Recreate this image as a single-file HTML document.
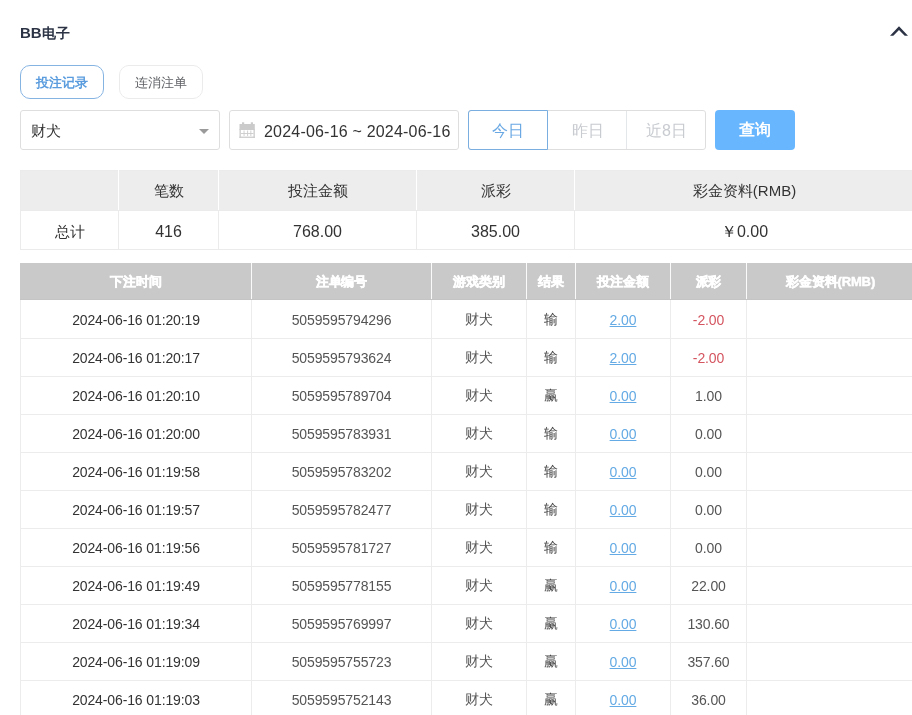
<!DOCTYPE html>
<html><head><meta charset="utf-8">
<style>
*{box-sizing:border-box;margin:0;padding:0}
html,body{width:912px;height:715px;overflow:hidden;background:#fff;font-family:"Liberation Sans",sans-serif;color:#333}
.abs{position:absolute}
.title{left:20px;top:24px;font-size:15px;font-weight:bold;color:#2b3344;line-height:18px}
.chev{left:889px;top:26px;width:18px;height:12px}
.tab{top:65px;height:34px;width:84px;border-radius:10px;border:1px solid #ebebeb;font-size:13px;line-height:33px;text-align:center;color:#606266}
.tab.on{border-color:#86b4e2;color:#5a9cde;font-weight:bold}
.box{top:110px;height:40px;border:1px solid #dedede;border-radius:3px}
.sel{left:20px;width:200px;font-size:15px;line-height:40px;padding-left:10px;color:#333}
.date{left:229px;width:230px;font-size:16px;line-height:41px;padding-left:34px;color:#333;letter-spacing:0.2px}
.grp{left:468px;width:238px}
.grp div{position:absolute;top:-1px;height:40px;line-height:42px;text-align:center;font-size:16px;color:#c8cbd0}
.grp .on{left:-1px;width:80px;color:#6aa8e4;border:1px solid #7aaee0;border-radius:3px 0 0 3px;line-height:40px}
.grp .sep{width:1px;background:#e4e6ea;top:0;height:38px}
.btn{left:715px;top:110px;width:80px;height:40px;border-radius:4px;background:#68b6fd;color:#fff;font-size:16px;line-height:40px;text-align:center;font-weight:600}
table{border-collapse:collapse;position:absolute;table-layout:fixed}
.sum{left:20px;top:170px;width:894px}
.sum td{border:1px solid #ebebeb;height:39px;text-align:center;font-size:16px;color:#333}
.sum tr.h td{font-size:15px}
.sum tr.d td{padding-top:4px}
.sum tr.d td:first-child{font-size:15px}
.sum tr.h td{background:#ededed;height:40px;padding-top:2px;border-right-color:#fff}
.det{left:20px;top:263px;width:894px}
.det td{border:1px solid #ececec;height:38px;text-align:center;font-size:14px;color:#333;letter-spacing:-0.12px}
.det td:nth-child(2),.det td:nth-child(3),.det td:nth-child(6){color:#555}
.det td:nth-child(4){color:#444}
.det tr.h td{height:36px;background:#c9c9c9;color:#fff;font-weight:bold;font-size:13px;border-color:#c9c9c9 #fafafa #c4c4c4 #c9c9c9;padding-top:1px;-webkit-text-stroke:0.5px #fff}
.det tr.f td{height:39px;padding-top:1px}
.lnk{color:#64aae4;text-decoration:underline;text-underline-offset:1px}
.det td.red{color:#d45560}
</style></head><body><div id="w" style="position:absolute;left:0;top:0;width:912px;height:715px;will-change:transform">
<div class="abs title">BB<span style="font-size:14px">电子</span></div>
<svg class="abs" style="left:880px;top:18px" width="32" height="28" viewBox="880 18 32 28"><path d="M890 35.8 L899 26.3 L908 35.8 L904.7 35.8 L899 29.9 L893.3 35.8 Z" fill="#2b3344"/></svg>
<div class="abs tab on" style="left:20px">投注记录</div>
<div class="abs tab" style="left:119px">连消注单</div>
<div class="abs box sel">财犬<span class="abs" style="left:178px;top:18px;width:0;height:0;border-left:5px solid transparent;border-right:5px solid transparent;border-top:5px solid #9a9a9a"></span></div>
<div class="abs box date"><svg class="abs" style="left:9px;top:11px" width="16" height="16" viewBox="238 122 16 16"><g fill="#cbcbcb"><rect x="238.5" y="124" width="15.3" height="6"/><rect x="241" y="122.3" width="2.2" height="3"/><rect x="249.8" y="122.3" width="2.2" height="3"/><rect x="238.5" y="129" width="1.3" height="9"/><rect x="252.5" y="129" width="1.3" height="9"/><rect x="238.5" y="136.6" width="15.3" height="1.3"/><rect x="242.6" y="130.5" width="0.9" height="5.5"/><rect x="246.2" y="130.5" width="0.9" height="5.5"/><rect x="249.4" y="130.5" width="0.9" height="5.5"/><rect x="240" y="133" width="12.5" height="0.9"/></g></svg>2024-06-16 ~ 2024-06-16</div>
<div class="abs box grp"><div class="on">今日</div><div style="left:79px;width:79px">昨日</div><div class="sep" style="left:157px"></div><div style="left:158px;width:79px">近8日</div></div>
<div class="abs btn">查询</div>
<table class="sum">
<colgroup><col style="width:98px"><col style="width:100px"><col style="width:198px"><col style="width:158px"><col style="width:340px"></colgroup>
<tr class="h"><td></td><td>笔数</td><td>投注金额</td><td>派彩</td><td>彩金资料(RMB)</td></tr>
<tr class="d"><td>总计</td><td>416</td><td>768.00</td><td>385.00</td><td>￥0.00</td></tr>
</table>
<table class="det">
<colgroup><col style="width:231px"><col style="width:180px"><col style="width:95px"><col style="width:49px"><col style="width:95px"><col style="width:76px"><col style="width:168px"></colgroup>
<tr class="h"><td>下注时间</td><td>注单编号</td><td>游戏类别</td><td>结果</td><td>投注金额</td><td>派彩</td><td>彩金资料(RMB)</td></tr>
<tr class="f"><td>2024-06-16 01:20:19</td><td>5059595794296</td><td>财犬</td><td>输</td><td><span class="lnk">2.00</span></td><td class="red">-2.00</td><td></td></tr>
<tr><td>2024-06-16 01:20:17</td><td>5059595793624</td><td>财犬</td><td>输</td><td><span class="lnk">2.00</span></td><td class="red">-2.00</td><td></td></tr>
<tr><td>2024-06-16 01:20:10</td><td>5059595789704</td><td>财犬</td><td>赢</td><td><span class="lnk">0.00</span></td><td>1.00</td><td></td></tr>
<tr><td>2024-06-16 01:20:00</td><td>5059595783931</td><td>财犬</td><td>输</td><td><span class="lnk">0.00</span></td><td>0.00</td><td></td></tr>
<tr><td>2024-06-16 01:19:58</td><td>5059595783202</td><td>财犬</td><td>输</td><td><span class="lnk">0.00</span></td><td>0.00</td><td></td></tr>
<tr><td>2024-06-16 01:19:57</td><td>5059595782477</td><td>财犬</td><td>输</td><td><span class="lnk">0.00</span></td><td>0.00</td><td></td></tr>
<tr><td>2024-06-16 01:19:56</td><td>5059595781727</td><td>财犬</td><td>输</td><td><span class="lnk">0.00</span></td><td>0.00</td><td></td></tr>
<tr><td>2024-06-16 01:19:49</td><td>5059595778155</td><td>财犬</td><td>赢</td><td><span class="lnk">0.00</span></td><td>22.00</td><td></td></tr>
<tr><td>2024-06-16 01:19:34</td><td>5059595769997</td><td>财犬</td><td>赢</td><td><span class="lnk">0.00</span></td><td>130.60</td><td></td></tr>
<tr><td>2024-06-16 01:19:09</td><td>5059595755723</td><td>财犬</td><td>赢</td><td><span class="lnk">0.00</span></td><td>357.60</td><td></td></tr>
<tr><td>2024-06-16 01:19:03</td><td>5059595752143</td><td>财犬</td><td>赢</td><td><span class="lnk">0.00</span></td><td>36.00</td><td></td></tr>
</table>
</div></body></html>
